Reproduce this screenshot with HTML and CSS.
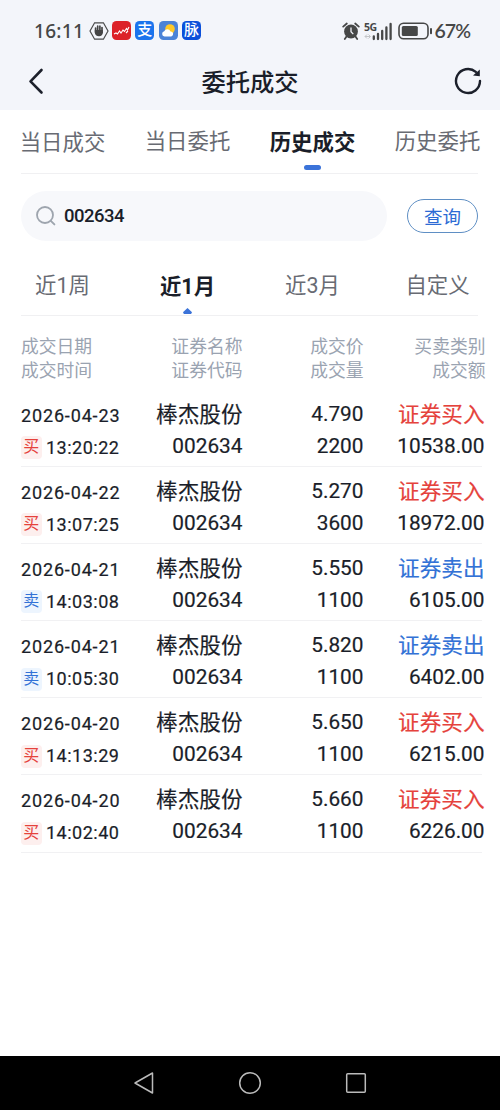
FILE: index.html
```
<!DOCTYPE html>
<html lang="zh-CN">
<head>
    <meta charset="UTF-8">
    <meta name="viewport" content="width=device-width, initial-scale=1.0">
    <title>委托成交</title>
    <link rel="stylesheet" href="styles.css">
</head>
<body>
    <div class="top">
        <!-- 状态栏 -->
        <div class="status">
            <span class="clock">16:11</span>
            <svg class="hand" width="20" height="20" viewBox="0 0 20 20">
                <path d="M5.6 1.8h8.8L19 10l-4.6 8.2H5.6L1 10z" fill="none" stroke="#4a4b4b" stroke-width="1.2"/>
                <path d="M6.6 7v4M8.7 5.2v5M10.9 5.2v5M13 6.6v5" stroke="#444" stroke-width="1.7" stroke-linecap="round"/>
                <path d="M5.8 9h8v2.5c0 2-1.4 3.8-3.8 3.8s-4.2-1.8-4.2-3.8z" fill="#444"/>
            </svg>
            <span class="app red">
                <svg width="19" height="19" viewBox="0 0 19 19"><path d="M2 13l2-1 1.5 1 2-3 1.5 2 2-3 1.5 1.5 2-3 1 1.5L17 6M14 12l2-2" fill="none" stroke="#fff" stroke-width="1.1"/></svg>
            </span>
            <span class="app zhi">支</span>
            <span class="app sky">
                <svg width="19" height="19" viewBox="0 0 19 19"><circle cx="11" cy="8" r="4.8" fill="#ffc928"/><path d="M5.5 15.5a2.7 2.7 0 0 1-.3-5.3 3.4 3.4 0 0 1 6.3.2 2.6 2.6 0 0 1 .8 5.1z" fill="#fff"/></svg>
            </span>
            <span class="app mai">脉</span>
            <span class="status-right">
                <svg width="18" height="18" viewBox="0 0 18 18">
                    <path d="M1.2 4.6L4.8 1.5M16.8 4.6L13.2 1.5M4.5 14.5L2.8 17M13.5 14.5l1.7 2.5" stroke="#464747" stroke-width="1.8" stroke-linecap="round"/>
                    <circle cx="9" cy="9.5" r="6.9" fill="#464747"/>
                    <path d="M9 5.5v4.3l2.3 2.3" fill="none" stroke="#f3f5fa" stroke-width="1.3"/>
                </svg>
                <svg class="signal" width="29" height="20" viewBox="0 0 29 20">
                    <text x="0" y="9.5">5G</text>
                    <path d="M1 15.5h5M3 13.5l-2 2 2 2M4.5 13.5l2 2-2 2" fill="none" stroke="#c3c5c8" stroke-width="1"/>
                    <path d="M9.8 18v-2.5M14 18v-5M18.2 18V10M22.4 18V6.5M26.6 18V3" stroke="#464747" stroke-width="2.3" stroke-linecap="round"/>
                </svg>
                <svg class="battery" width="35" height="18" viewBox="0 0 35 18">
                    <rect x="1" y="1.2" width="29" height="15.6" rx="4.5" fill="none" stroke="#464747" stroke-width="1.6"/>
                    <rect x="3.8" y="4" width="16" height="10" rx="1.5" fill="#464747"/>
                    <path d="M33 7v4.2" stroke="#464747" stroke-width="2" stroke-linecap="round"/>
                </svg>
                <span class="percent">67%</span>
            </span>
        </div>
        <div class="nav">
            <svg width="16" height="28" viewBox="0 0 16 28"><path d="M13.5 3L2.5 14.3l11 11.2" fill="none" stroke="#1c202b" stroke-width="2.6" stroke-linecap="round" stroke-linejoin="round"/></svg>
            <h1>委托成交</h1>
            <svg width="28" height="28" viewBox="0 0 28 28">
                <path d="M26 14a12 12 0 1 1-4.2-9.1" fill="none" stroke="#1c202b" stroke-width="2.4" stroke-linecap="round"/>
                <path d="M25.8 2.5v6.8l-6.8-.8z" fill="#1c202b"/>
            </svg>
        </div>
    </div>

    <ul class="tabs">
        <li class="semi">当日成交</li>
        <li>当日委托</li>
        <li class="active">历史成交</li>
        <li>历史委托</li>
    </ul>

    <div class="search">
        <div class="input">
            <svg width="20" height="20" viewBox="0 0 20 20"><circle cx="9" cy="9" r="8" fill="none" stroke="#9ea5ae" stroke-width="1.8"/><path d="M14.8 14.8l3.6 3.6" stroke="#9ea5ae" stroke-width="1.9" stroke-linecap="round"/></svg>
            <span>002634</span>
        </div>
        <button>查询</button>
    </div>

    <ul class="tabs range">
        <li>近1周</li>
        <li class="active">近1月</li>
        <li>近3月</li>
        <li>自定义</li>
    </ul>

    <div class="row head">
        <div><p>成交日期</p><p>成交时间</p></div>
        <div><p>证券名称</p><p>证券代码</p></div>
        <div><p>成交价</p><p>成交量</p></div>
        <div><p>买卖类别</p><p>成交额</p></div>
    </div>

    <div class="list">
        <div class="row buy">
            <div class="date"><p>2026-04-23</p><p class="time"><i>买</i>13:20:22</p></div>
            <div><p class="cn">棒杰股份</p><p>002634</p></div>
            <div><p>4.790</p><p>2200</p></div>
            <div><p class="cn type">证券买入</p><p>10538.00</p></div>
        </div>
        <div class="row buy">
            <div class="date"><p>2026-04-22</p><p class="time"><i>买</i>13:07:25</p></div>
            <div><p class="cn">棒杰股份</p><p>002634</p></div>
            <div><p>5.270</p><p>3600</p></div>
            <div><p class="cn type">证券买入</p><p>18972.00</p></div>
        </div>
        <div class="row sell">
            <div class="date"><p>2026-04-21</p><p class="time"><i>卖</i>14:03:08</p></div>
            <div><p class="cn">棒杰股份</p><p>002634</p></div>
            <div><p>5.550</p><p>1100</p></div>
            <div><p class="cn type">证券卖出</p><p>6105.00</p></div>
        </div>
        <div class="row sell">
            <div class="date"><p>2026-04-21</p><p class="time"><i>卖</i>10:05:30</p></div>
            <div><p class="cn">棒杰股份</p><p>002634</p></div>
            <div><p>5.820</p><p>1100</p></div>
            <div><p class="cn type">证券卖出</p><p>6402.00</p></div>
        </div>
        <div class="row buy">
            <div class="date"><p>2026-04-20</p><p class="time"><i>买</i>14:13:29</p></div>
            <div><p class="cn">棒杰股份</p><p>002634</p></div>
            <div><p>5.650</p><p>1100</p></div>
            <div><p class="cn type">证券买入</p><p>6215.00</p></div>
        </div>
        <div class="row buy">
            <div class="date"><p>2026-04-20</p><p class="time"><i>买</i>14:02:40</p></div>
            <div><p class="cn">棒杰股份</p><p>002634</p></div>
            <div><p>5.660</p><p>1100</p></div>
            <div><p class="cn type">证券买入</p><p>6226.00</p></div>
        </div>
    </div>

    <!-- 系统导航键 -->
    <div class="keys">
        <svg width="24" height="24" viewBox="0 0 24 24"><path d="M20.5 2v20L3 12z"/></svg>
        <svg width="24" height="24" viewBox="0 0 24 24"><circle cx="12" cy="12" r="10.3"/></svg>
        <svg width="24" height="24" viewBox="0 0 24 24"><rect x="2.7" y="2.7" width="18.6" height="18.6" rx="1"/></svg>
    </div>
</body>
</html>
```
FILE: styles.css
```
* {
    margin: 0;
    padding: 0;
    list-style: none;
    box-sizing: border-box;
}
body {
    display: flex;
    flex-direction: column;
    height: 1110px;
    overflow: hidden;
    background-color: #fff;
    color: #1a1e29;
    font-family: Roboto, "Noto Sans CJK SC", sans-serif;
}
svg {
    display: block;
    flex-shrink: 0;
}
.top {
    height: 110px;
    background-color: #f3f5fa;
}

/* 状态栏 */
.status {
    display: flex;
    align-items: center;
    height: 61px;
    padding: 0 30px 0 34px;
    color: #464747;
}
.clock {
    width: 55px;
    font: 500 19px "Noto Sans", sans-serif;
    letter-spacing: .3px;
}
.app {
    width: 19px;
    height: 19px;
    margin-left: 4.3px;
    border-radius: 4.5px;
    color: #fff;
    font-size: 15px;
    font-weight: 500;
    line-height: 19px;
    text-align: center;
}
.hand + .app {
    margin-left: 3px;
}
.red {
    background-color: #dc2229;
}
.zhi {
    background-color: #1b74ed;
}
.sky {
    background-color: #4b83d8;
}
.mai {
    background-color: #0b50da;
}
.status-right {
    display: flex;
    align-items: center;
    margin-left: auto;
}
.signal {
    margin-left: 4px;
}
.signal text {
    font: 700 10.5px "Noto Sans", sans-serif;
    fill: #464747;
    letter-spacing: -.5px;
}
.battery {
    margin-left: 5px;
}
.percent {
    margin-left: 2px;
    font: 600 19.5px Lato, sans-serif;
    letter-spacing: -1px;
}

.nav {
    display: flex;
    align-items: center;
    justify-content: space-between;
    height: 40px;
    padding: 0 18px 0 28px;
}
.nav h1 {
    margin: -2px 0 0 2px;
    font-size: 24.3px;
    font-weight: 500;
}

/* 选项卡 */
.tabs {
    display: flex;
    position: relative;
    height: 64px;
}
.tabs::after {
    content: '';
    position: absolute;
    left: 21px;
    right: 22px;
    bottom: 0;
    height: 1px;
    background-color: #f0f0f2;
}
.tabs li {
    position: relative;
    width: 125px;
    line-height: 64px;
    text-align: center;
    font-size: 21.4px;
    color: #686b73;
}
.tabs .semi {
    line-height: 66px;
}
.tabs .active {
    color: #1a1e29;
    font-weight: 700;
    line-height: 66px;
}
.tabs .active::after {
    content: '';
    position: absolute;
    left: 54px;
    bottom: 4px;
    width: 17px;
    height: 5px;
    border-radius: 2.5px;
    background-color: #3b73d9;
}

.search {
    display: flex;
    align-items: center;
    justify-content: space-between;
    height: 83px;
    padding: 0 22px 0 21px;
}
.input {
    display: flex;
    align-items: center;
    width: 366px;
    height: 50px;
    padding-left: 15px;
    border-radius: 25px;
    background-color: #f7f8fb;
}
.input span {
    margin-left: 8px;
    font-size: 18.5px;
    font-weight: 500;
    letter-spacing: -.5px;
}
.search button {
    width: 71px;
    height: 34px;
    border: 1px solid #5f8fc4;
    border-radius: 17px;
    background-color: #fff;
    color: #2c6bd4;
    font: 400 18.5px/30px "Noto Sans CJK SC", sans-serif;
}

.range {
    height: 59px;
}
.range li {
    line-height: 58px;
}
.range .active {
    line-height: 60px;
}
.range .active::after {
    left: 58px;
    bottom: 2px;
    width: 9px;
    height: 6px;
    border-radius: 0;
    clip-path: polygon(50% 0, 100% 70%, 90% 100%, 10% 100%, 0 70%);
}

/* 成交列表 */
.row {
    display: grid;
    grid-template-columns: 102px 119.5px 121px 121px;
    padding-left: 21px;
    text-align: right;
    white-space: nowrap;
}
.row > :first-child {
    text-align: left;
}
.head {
    height: 74px;
    padding-top: 18.5px;
    color: #9aa3b1;
    font-size: 17.8px;
    line-height: 24.5px;
}
.head > :last-child {
    margin-right: -1px;
}
.list .row {
    position: relative;
    height: 77.1px;
    padding-top: 9px;
    font-size: 20.8px;
    line-height: 31.5px;
    -webkit-text-stroke: .2px;
}
.list .row::after {
    content: '';
    position: absolute;
    left: 21px;
    right: 18px;
    bottom: 0;
    height: 1px;
    background-color: #f1f1f3;
}
.list .cn {
    height: 31.5px;
    font-size: 21.6px;
}
.list .date {
    padding-top: .5px;
    font-size: 18px;
    letter-spacing: .85px;
}
.date .time {
    display: flex;
    align-items: center;
    height: 33.5px;
    letter-spacing: .5px;
}
.time i {
    width: 21px;
    height: 23px;
    margin-right: 4px;
    border-radius: 4px;
    font-size: 16px;
    font-style: normal;
    line-height: 22px;
    text-align: center;
    -webkit-text-stroke: 0;
}
.buy .type, .buy i {
    color: #e5423c;
}
.buy i {
    background-color: #fdefee;
}
.sell .type, .sell i {
    color: #3272d6;
}
.sell i {
    background-color: #edf5fe;
}

.keys {
    display: flex;
    align-items: center;
    justify-content: space-between;
    height: 54px;
    margin-top: auto;
    padding: 0 132px;
    background-color: #000;
}
.keys svg {
    fill: none;
    stroke: #bbb;
    stroke-width: 1.5;
    stroke-linejoin: round;
}
```
